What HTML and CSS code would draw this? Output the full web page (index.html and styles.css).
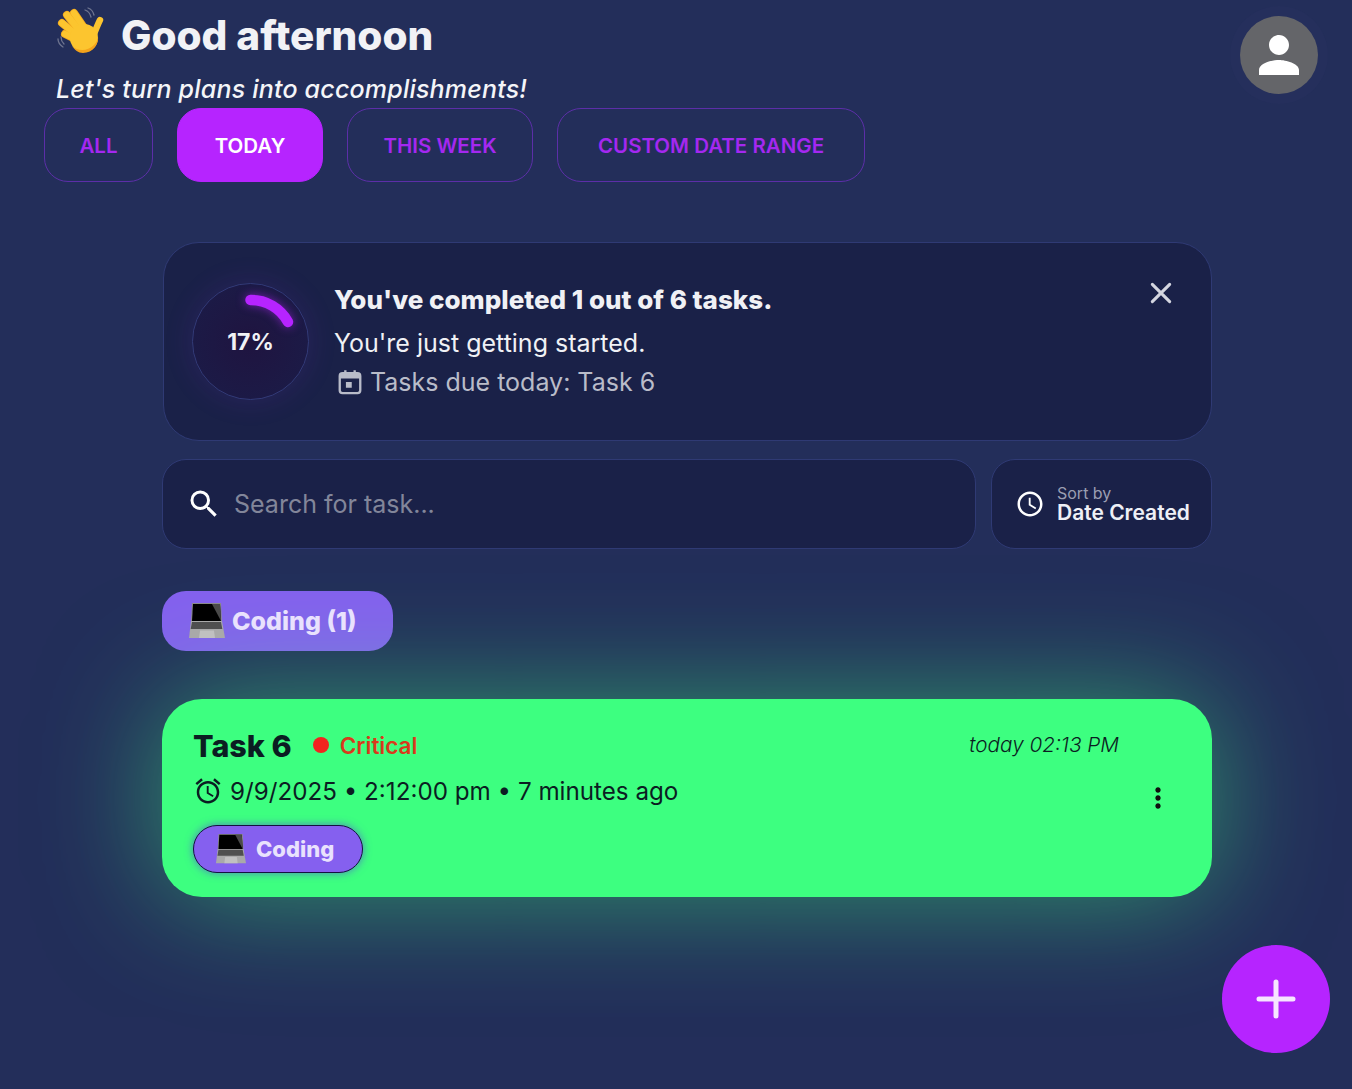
FILE: index.html
```html
<!DOCTYPE html>
<html lang="en">
<head>
    <meta charset="UTF-8">
    <title>Todo App</title>
    <link rel="stylesheet" href="styles.css">
</head>
<body>
    <header class="top-bar">
        <div>
            <h1 class="greeting">
                <svg class="wave" viewBox="0 0 50 50" width="50" height="50">
                    <g fill="none" stroke="#6f7590" stroke-width="1.3" stroke-linecap="round">
                        <path d="M28 3c3 1 5 3 6 7"/><path d="M31 1c3 1 5 3 6 7"/>
                        <path d="M1 32c0 3 2 6 5 8"/><path d="M4 30c0 3 1 5 3 7"/>
                    </g>
                    <g fill="none" stroke="#f2a81f" stroke-width="8" stroke-linecap="round">
                        <path d="M17 6l13 19"/><path d="M10 8l15 19"/><path d="M5 16l17 14"/><path d="M8 27l12 6"/>
                    </g>
                    <g fill="none" stroke="#fcc52f" stroke-width="6.4" stroke-linecap="round">
                        <path d="M17 6l13 19"/><path d="M10 8l15 19"/><path d="M5 16l17 14"/><path d="M8 27l12 6"/>
                        <path d="M43 13c-2 4-4 9-6 14"/>
                    </g>
                    <circle cx="27" cy="31" r="14" fill="#fcc52f"/>
                    <path fill="#f4a31b" d="M15 39c5 5 15 6 22-1 3-3 4-6 4-9 1 8-5 17-15 17-5 0-8-3-11-7z"/>
                </svg>
                <span>Good afternoon</span>
            </h1>
            <p class="subtitle">Let's turn plans into accomplishments!</p>
        </div>
        <div class="avatar">
            <svg viewBox="0 0 24 24" width="60" height="60"><path fill="#fff" d="M12 12c2.21 0 4-1.79 4-4s-1.79-4-4-4-4 1.79-4 4 1.79 4 4 4zm0 2c-2.67 0-8 1.34-8 4v2h16v-2c0-2.66-5.33-4-8-4z"/></svg>
        </div>
    </header>

    <nav class="filters">
        <button class="filter filter-all">ALL</button>
        <button class="filter filter-today active">TODAY</button>
        <button class="filter filter-week">THIS WEEK</button>
        <button class="filter filter-range">CUSTOM DATE RANGE</button>
    </nav>

    <main class="content">
        <section class="summary">
            <div class="ring">
                <svg viewBox="0 0 116 116" width="116" height="116">
                    <path d="M57.5 16A42 42 0 0 1 95 38" fill="none" stroke="#b624ff" stroke-width="10.5" stroke-linecap="round"/>
                </svg>
                <span class="ring-label">17%</span>
            </div>
            <div class="summary-text">
                <div class="summary-title">You've completed 1 out of 6 tasks.</div>
                <div class="summary-line">You're just getting started.</div>
                <div class="summary-due">
                    <svg viewBox="0 0 24 24" width="28" height="28">
                        <rect x="3.2" y="4.5" width="17.6" height="17" rx="2.4" fill="none" stroke="currentColor" stroke-width="2"/>
                        <path fill="currentColor" d="M3 5h18v4H3zM7 2h2v4H7zM15 2h2v4h-2zM8.5 12h5v5h-5z"/>
                    </svg>
                    <span>Tasks due today: Task 6</span>
                </div>
            </div>
            <svg class="close" viewBox="0 0 24 24" width="32" height="32"><path d="M5.5 5.5l13 13M18.5 5.5l-13 13" fill="none" stroke="#d4d6e0" stroke-width="2.3" stroke-linecap="round"/></svg>
        </section>

        <div class="tools">
            <div class="search">
                <svg viewBox="0 0 24 24" width="36" height="36"><path fill="#fff" d="M15.5 14h-.79l-.28-.27A6.47 6.47 0 0 0 16 9.5 6.5 6.5 0 1 0 9.5 16c1.61 0 3.09-.59 4.23-1.57l.27.28v.79l5 4.99L20.49 19l-4.99-5zm-6 0C7.01 14 5 11.99 5 9.5S7.01 5 9.5 5 14 7.01 14 9.5 11.99 14 9.5 14z"/></svg>
                <span>Search for task...</span>
            </div>
            <div class="sort">
                <svg viewBox="0 0 24 24" width="30" height="30"><path fill="#fff" d="M11.99 2C6.47 2 2 6.48 2 12s4.47 10 9.99 10C17.52 22 22 17.52 22 12S17.52 2 11.99 2zM12 20c-4.42 0-8-3.58-8-8s3.58-8 8-8 8 3.58 8 8-3.58 8-8 8zm.5-13H11v6l5.25 3.15.75-1.23-4.5-2.67z"/></svg>
                <div class="sort-text">
                    <span class="sort-label">Sort by</span>
                    <span class="sort-value">Date Created</span>
                </div>
            </div>
        </div>

        <div class="category-chip">
            <svg class="laptop" viewBox="0 0 36 36" width="36" height="36">
                <path fill="#8a8a8a" d="M3 0h29l1 19H2z"/>
                <path fill="#000" d="M4 1h27l1 17H3z"/>
                <path fill="#4a4a4a" d="M23 1h8l1 17z"/>
                <path fill="#a9a9a9" d="M2 18h31l3 17H0z"/>
                <path fill="#4f4f4f" d="M3 19h29l1.3 7H1.7z"/>
                <path fill="#c0c0c0" d="M11 27.5h14l1 7.5H10z"/>
            </svg>
            <span>Coding (1)</span>
        </div>

        <article class="task">
            <div class="task-body">
                <div class="task-head">
                    <h2 class="task-name">Task 6</h2>
                    <span class="priority"><i class="dot"></i>Critical</span>
                </div>
                <div class="task-date">
                    <svg viewBox="0 0 24 24" width="30" height="30"><path fill="currentColor" d="M22 5.72l-4.6-3.86-1.29 1.53 4.6 3.86L22 5.72zM7.88 3.39 6.6 1.86 2 5.71l1.29 1.53 4.59-3.85zM12.5 8H11v6l4.75 2.85.75-1.23-4-2.37V8zM12 4c-4.97 0-9 4.03-9 9s4.03 9 9 9 9-4.03 9-9-4.03-9-9-9zm0 16c-3.87 0-7-3.13-7-7s3.13-7 7-7 7 3.13 7 7-3.13 7-7 7z"/></svg>
                    <span>9/9/2025 • 2:12:00 pm • 7 minutes ago</span>
                </div>
                <div class="task-tag">
                    <svg class="laptop" viewBox="0 0 36 36" width="30" height="30">
                        <path fill="#8a8a8a" d="M3 0h29l1 19H2z"/>
                        <path fill="#000" d="M4 1h27l1 17H3z"/>
                        <path fill="#4a4a4a" d="M23 1h8l1 17z"/>
                        <path fill="#a9a9a9" d="M2 18h31l3 17H0z"/>
                        <path fill="#4f4f4f" d="M3 19h29l1.3 7H1.7z"/>
                        <path fill="#c0c0c0" d="M11 27.5h14l1 7.5H10z"/>
                    </svg>
                    <span>Coding</span>
                </div>
            </div>
            <div class="task-side">
                <span class="task-time">today 02:13 PM</span>
                <svg class="task-menu" viewBox="0 0 24 24" width="32" height="32"><path fill="#101010" d="M12 8c1.1 0 2-.9 2-2s-.9-2-2-2-2 .9-2 2 .9 2 2 2zm0 2c-1.1 0-2 .9-2 2s.9 2 2 2 2-.9 2-2-.9-2-2-2zm0 6c-1.1 0-2 .9-2 2s.9 2 2 2 2-.9 2-2-.9-2-2-2z"/></svg>
            </div>
        </article>
    </main>

    <button class="fab">
        <svg viewBox="0 0 40 40" width="40" height="40"><path d="M20 3v34M3 20h34" fill="none" stroke="#f6e6ff" stroke-width="5" stroke-linecap="round"/></svg>
    </button>
</body>
</html>
```

FILE: styles.css
```css
* {
    box-sizing: border-box;
}
html, body {
    height: 100%;
}
body {
    margin: 0;
    background-color: #232e5a;
    color: #f0f1f5;
    font-family: "Inter", "Liberation Sans", sans-serif;
    overflow: hidden;
}
.top-bar {
    display: flex;
    justify-content: space-between;
    height: 108px;
    padding: 0 34px 0 56px;
}
.greeting {
    display: flex;
    align-items: center;
    gap: 14px;
    margin: 10px 0 0;
    height: 50px;
    font-size: 40.5px;
    font-weight: 800;
    color: #f1f2f6;
}
.wave {
    margin: -6px 0 0 1px;
}
.subtitle {
    margin: 13px 0 0;
    font-size: 25px;
    font-style: italic;
    font-weight: 500;
    letter-spacing: 0.2px;
    line-height: 32px;
    color: #f4f5f8;
}
.avatar {
    display: flex;
    align-items: center;
    justify-content: center;
    width: 78px;
    height: 78px;
    margin-top: 16px;
    border-radius: 50%;
    background-color: #646569;
    box-shadow: 0 0 0 10px #252f5c;
}
.filters {
    display: flex;
    gap: 24px;
    padding-left: 44px;
}
.filter {
    height: 74px;
    border: 1px solid #5c2ea8;
    border-radius: 24px;
    background: none;
    color: #a428f0;
    font-family: inherit;
    font-size: 20.5px;
    font-weight: 600;
    padding: 0;
}
.filter-all { width: 109px; }
.filter-today { width: 146px; }
.filter-week { width: 186px; }
.filter-range { width: 308px; }
.filter.active {
    background-color: #b624ff;
    border-color: #b624ff;
    color: #fff;
}
.content {
    width: 1050px;
    margin: 60px 0 0 162px;
}
.summary {
    display: flex;
    align-items: center;
    position: relative;
    height: 199px;
    margin-left: 1px;
    padding-left: 28px;
    background-color: #1a2148;
    border: 1px solid #2f3a74;
    border-radius: 36px;
}
.ring {
    position: relative;
    flex: none;
    width: 117px;
    height: 117px;
    border: 1px solid #333a78;
    border-radius: 50%;
    background: radial-gradient(circle, #1f1440 0%, #1c1a46 70%, #1b1c48 100%);
    box-shadow: 0 0 30px rgba(140, 40, 220, 0.14);
}
.ring svg {
    display: block;
    filter: drop-shadow(0 0 5px rgba(182, 36, 255, 0.55));
}
.ring-label {
    position: absolute;
    inset: 0;
    display: flex;
    align-items: center;
    justify-content: center;
    font-size: 23px;
    font-weight: 700;
}
.summary-text {
    margin-left: 25px;
    padding-bottom: 2px;
}
.summary-title {
    font-size: 26px;
    font-weight: 800;
    line-height: 36px;
    margin-bottom: 7px;
}
.summary-line {
    font-size: 25px;
    line-height: 36px;
    margin-bottom: 3px;
}
.summary-due {
    display: flex;
    align-items: center;
    gap: 6px;
    font-size: 25px;
    line-height: 36px;
    color: #b9bcc9;
}
.summary-due svg {
    margin-left: 2px;
}
.close {
    position: absolute;
    top: 34px;
    right: 34px;
}
.tools {
    display: flex;
    gap: 15px;
    margin-top: 18px;
}
.search {
    display: flex;
    align-items: center;
    gap: 12px;
    width: 814px;
    height: 90px;
    padding-left: 23px;
    background-color: #1a2148;
    border: 1px solid #2f3a74;
    border-radius: 24px;
    font-size: 25px;
    color: #82869a;
}
.sort {
    display: flex;
    align-items: center;
    gap: 12px;
    flex: 1;
    height: 90px;
    padding-left: 23px;
    background-color: #1a2148;
    border: 1px solid #2f3a74;
    border-radius: 24px;
}
.sort-text {
    display: flex;
    flex-direction: column;
}
.sort-label {
    font-size: 16px;
    line-height: 17px;
    color: #9a9eb2;
}
.sort-value {
    font-size: 21px;
    font-weight: 600;
    line-height: 22px;
    color: #eef0f6;
}
.category-chip {
    display: flex;
    align-items: center;
    gap: 7px;
    width: 231px;
    height: 60px;
    margin-top: 42px;
    padding-left: 27px;
    background-color: #8560ef;
    border-radius: 24px;
    font-size: 25px;
    font-weight: 800;
    color: #e9e2fd;
}
.task {
    display: flex;
    justify-content: space-between;
    height: 198px;
    margin-top: 48px;
    padding: 28px 38px 24px 31px;
    background-color: #3dff80;
    border-radius: 40px;
    box-shadow: 0 0 120px rgba(61, 255, 128, 0.5);
    color: #0b1d22;
}
.task-head {
    display: flex;
    align-items: center;
    gap: 21px;
    height: 36px;
}
.task-name {
    margin: 0;
    font-size: 30.5px;
    font-weight: 800;
}
.priority {
    display: flex;
    align-items: center;
    gap: 11px;
    font-size: 22.5px;
    font-weight: 600;
    color: #d93a1c;
}
.dot {
    width: 16px;
    height: 16px;
    border-radius: 50%;
    background-color: #f2241f;
}
.task-date {
    display: flex;
    align-items: center;
    gap: 7px;
    height: 36px;
    margin-top: 10px;
    font-size: 24.2px;
}
.task-tag {
    display: flex;
    align-items: center;
    gap: 10px;
    width: 170px;
    height: 48px;
    margin-top: 16px;
    padding-left: 22px;
    background-color: #8560ef;
    border: 1px solid #15123f;
    border-radius: 24px;
    box-shadow: 0 0 8px rgba(90, 70, 220, 0.7);
    font-size: 22px;
    font-weight: 800;
    color: #e9e2fd;
}
.task-side {
    display: flex;
    flex-direction: column;
    align-items: flex-end;
}
.task-time {
    height: 36px;
    margin-right: 55px;
    font-size: 20.7px;
    font-style: italic;
    font-weight: 300;
    line-height: 36px;
    white-space: nowrap;
}
.task-menu {
    margin: 19px 0 0 0;
}
.fab {
    position: absolute;
    top: 945px;
    left: 1222px;
    display: flex;
    align-items: center;
    justify-content: center;
    width: 108px;
    height: 108px;
    padding: 0;
    border: none;
    border-radius: 50%;
    background-color: #b624ff;
}
```
